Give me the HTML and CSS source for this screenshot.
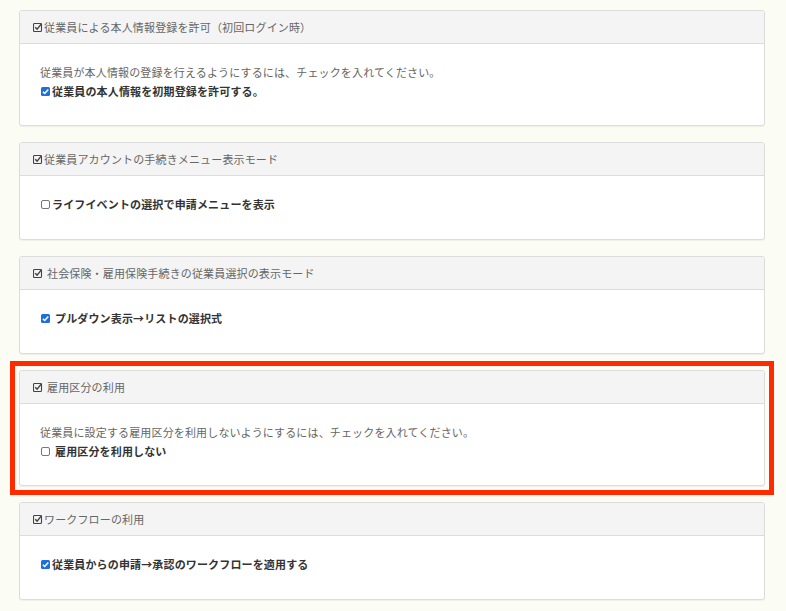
FILE: index.html
```html
<!DOCTYPE html>
<html lang="ja">
<head>
<meta charset="utf-8">
<title>設定</title>
<link rel="stylesheet" href="styles.css">
</head>
<body>
<main class="page">

  <section class="panel">
    <div class="panel-heading">
      <svg class="hd-icon" viewBox="0 0 10 10"><rect x="0.5" y="1.5" width="8" height="8" rx="1"/><path d="M2.2 5.2 L4.1 7.1 L8.6 1.6"/></svg>従業員による本人情報登録を許可（初回ログイン時）
    </div>
    <div class="panel-body">
      <p class="desc">従業員が本人情報の登録を行えるようにするには、チェックを入れてください。</p>
      <label class="check"><svg class="box" viewBox="0 0 9 9"><rect class="on" x="0" y="0" width="9" height="9" rx="1.5"/><path class="tick" d="M1.9 4.7 L3.7 6.5 L7.3 2.4"/></svg>従業員の本人情報を初期登録を許可する。</label>
    </div>
  </section>

  <section class="panel">
    <div class="panel-heading">
      <svg class="hd-icon" viewBox="0 0 10 10"><rect x="0.5" y="1.5" width="8" height="8" rx="1"/><path d="M2.2 5.2 L4.1 7.1 L8.6 1.6"/></svg>従業員アカウントの手続きメニュー表示モード
    </div>
    <div class="panel-body single">
      <label class="check"><svg class="box" viewBox="0 0 9 9"><rect class="off" x="0.5" y="0.5" width="8" height="8" rx="1.5"/></svg>ライフイベントの選択で申請メニューを表示</label>
    </div>
  </section>

  <section class="panel">
    <div class="panel-heading">
      <svg class="hd-icon spaced" viewBox="0 0 10 10"><rect x="0.5" y="1.5" width="8" height="8" rx="1"/><path d="M2.2 5.2 L4.1 7.1 L8.6 1.6"/></svg>社会保険・雇用保険手続きの従業員選択の表示モード
    </div>
    <div class="panel-body single">
      <label class="check"><svg class="box spaced" viewBox="0 0 9 9"><rect class="on" x="0" y="0" width="9" height="9" rx="1.5"/><path class="tick" d="M1.9 4.7 L3.7 6.5 L7.3 2.4"/></svg>プルダウン表示→リストの選択式</label>
    </div>
  </section>

  <section class="panel highlighted">
    <div class="panel-heading">
      <svg class="hd-icon spaced" viewBox="0 0 10 10"><rect x="0.5" y="1.5" width="8" height="8" rx="1"/><path d="M2.2 5.2 L4.1 7.1 L8.6 1.6"/></svg>雇用区分の利用
    </div>
    <div class="panel-body">
      <p class="desc">従業員に設定する雇用区分を利用しないようにするには、チェックを入れてください。</p>
      <label class="check"><svg class="box spaced" viewBox="0 0 9 9"><rect class="off" x="0.5" y="0.5" width="8" height="8" rx="1.5"/></svg>雇用区分を利用しない</label>
    </div>
  </section>

  <section class="panel">
    <div class="panel-heading">
      <svg class="hd-icon" viewBox="0 0 10 10"><rect x="0.5" y="1.5" width="8" height="8" rx="1"/><path d="M2.2 5.2 L4.1 7.1 L8.6 1.6"/></svg>ワークフローの利用
    </div>
    <div class="panel-body single">
      <label class="check"><svg class="box" viewBox="0 0 9 9"><rect class="on" x="0" y="0" width="9" height="9" rx="1.5"/><path class="tick" d="M1.9 4.7 L3.7 6.5 L7.3 2.4"/></svg>従業員からの申請→承認のワークフローを適用する</label>
    </div>
  </section>

</main>
</body>
</html>
```

FILE: styles.css
```css
html, body {
  margin: 0;
  padding: 0;
  background: #fbfdf5;
}

body {
  font-family: "Noto Sans CJK JP", "Noto Sans", sans-serif;
  font-size: 11px;
  color: #333;
}

.page {
  padding: 10px 21px 0 19px;
}

.panel {
  position: relative;
  background: #fff;
  border: 1px solid #dcdcdc;
  border-radius: 3px;
  box-shadow: 0 1px 1px rgba(0, 0, 0, 0.05);
  margin-bottom: 16px;
}

.panel.highlighted::after {
  content: "";
  position: absolute;
  top: -10px;
  left: -10px;
  right: -10px;
  bottom: -10px;
  border: 5px solid #ff2a00;
  pointer-events: none;
}

.panel-heading {
  height: 32px;
  display: flex;
  align-items: center;
  padding-left: 13px;
  background: #f4f4f4;
  border-bottom: 1px solid #dcdcdc;
  border-radius: 3px 3px 0 0;
  color: #666;
  font-size: 11px;
  letter-spacing: 0.15px;
}

.hd-icon {
  width: 10px;
  height: 10px;
  flex: none;
  margin-right: 1px;
  margin-top: -1px;
}

.hd-icon.spaced {
  margin-right: 4px;
}

.hd-icon rect {
  fill: none;
  stroke: #444;
  stroke-width: 1.1;
}

.hd-icon path {
  fill: none;
  stroke: #444;
  stroke-width: 1.4;
}

.panel-body {
  padding: 19px 20px 24px 20px;
  line-height: 19px;
}

.panel-body.single {
  padding-bottom: 25px;
}

.desc {
  margin: 0;
  color: #666;
  letter-spacing: 0.15px;
}

.check {
  display: flex;
  align-items: center;
  font-weight: bold;
  color: #333;
  margin-left: 1px;
  letter-spacing: 0.15px;
}

.box {
  width: 9px;
  height: 9px;
  flex: none;
  margin-right: 2px;
}

.box.spaced {
  margin-right: 5px;
}

.box .on {
  fill: #1e6fdc;
}

.box .off {
  fill: #fff;
  stroke: #777;
  stroke-width: 1;
}

.box .tick {
  fill: none;
  stroke: #fff;
  stroke-width: 1.5;
}
```
